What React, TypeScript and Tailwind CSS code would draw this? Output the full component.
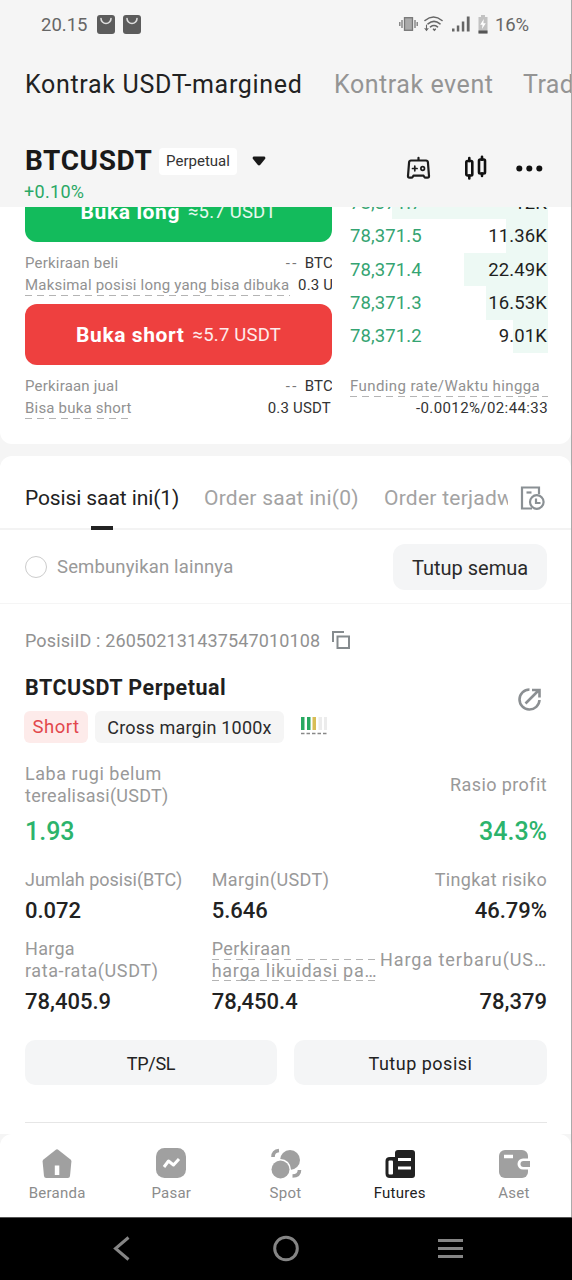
import type { ReactNode } from "react"
import clsx from "clsx"

const orderBook = [
    { price: "78,371.7", amount: "12K", bar: "w-[156px]" },
    { price: "78,371.5", amount: "11.36K", bar: "w-[42px]" },
    { price: "78,371.4", amount: "22.49K", bar: "w-[84px]" },
    { price: "78,371.3", amount: "16.53K", bar: "w-[62px]" },
    { price: "78,371.2", amount: "9.01K", bar: "w-[35px]" },
]

function Dashes({ className }: { className?: string }) {
    return (
        <div
            className={clsx(
                "h-px bg-[repeating-linear-gradient(90deg,#b4b4b4_0_7px,transparent_7px_12px)]",
                className
            )}
        />
    )
}

function StatusBar() {
    return (
        <div className="flex h-12 items-center pl-[41px] pr-[42px] text-[18.5px] text-[#666]">
            <span className="pt-[3px]">20.15</span>
            <div className="ml-[10px] flex gap-2">
                {[0, 1].map((i) => (
                    <svg key={i} width="18" height="19" viewBox="0 0 18 19">
                        <rect width="18" height="19" rx="3" fill="#5c5c5c" />
                        <path d="M4 3.5a5 5 0 0 0 10 0" fill="none" stroke="#dedede" strokeWidth="1.6" strokeLinecap="round" />
                    </svg>
                ))}
            </div>
            <svg className="ml-auto" width="19" height="16" viewBox="0 0 19 16" fill="none" stroke="#777" strokeWidth="1.3">
                <rect x="5.5" y="1.7" width="8" height="12.6" fill="#aaa" />
                <path d="M3 4v8M16 4v8M.8 6v4M18.2 6v4" />
            </svg>
            <svg className="ml-[6px]" width="19" height="16" viewBox="0 0 19 16" fill="none" stroke="#666" strokeWidth="1.6" strokeLinecap="round">
                <path d="M1 4.500Q9.500-2.500 18 4.500M4 7.800Q10 3 16 7.800M6.500 10.800Q10 8.200 13.500 10.800" />
                <path d="M9.500 13.200l.9.900.9-.9" />
                <path d="M2.500 9v5M1 12.500l1.500 1.800L4 12.500" strokeWidth="1.100" />
            </svg>
            <svg className="ml-[9px]" width="18" height="16" viewBox="0 0 18 16" fill="#666">
                <rect x="0" y="12.500" width="2.500" height="3" />
                <rect x="4.800" y="9.500" width="2.500" height="6" />
                <rect x="9.800" y="5.500" width="2.500" height="10" />
                <rect x="14.800" y="0.500" width="2.800" height="15" />
            </svg>
            <svg className="ml-2" width="10" height="19" viewBox="0 0 10 19">
                <path d="M3 0h4v2h2.500v16.500H.500V2H3z" fill="#c2c2c2" />
                <path d="M.500 15.500h9v3h-9z" fill="#555" />
                <path d="M5.800 4L2.200 9.800h2.300L4 14l3.800-5.800H5.400z" fill="#fff" />
            </svg>
            <span className="ml-[7px] pt-[3px] tracking-[-0.1px]">16%</span>
        </div>
    )
}

function Header() {
    return (
        <header className="h-[159px] shrink-0">
            <div className="flex h-[72px] items-center overflow-hidden whitespace-nowrap pl-[25px] pt-px text-[25px] text-[#949494]">
                <span className="w-[309px] shrink-0 tracking-[0.68px] text-[#222]">Kontrak USDT-margined</span>
                <span className="w-[189px] shrink-0 tracking-[0.55px]">Kontrak event</span>
                <span className="tracking-[0.4px]">Trading</span>
            </div>
            <div className="flex pl-[25px] pr-[27px]">
                <div className="flex flex-col pt-[23px]">
                    <div className="flex h-9 items-center">
                        <span className="w-[134px] text-[28px] font-bold tracking-[0.6px] text-[#191919]">BTCUSDT</span>
                        <span className="flex h-[27px] w-[78px] items-center justify-center rounded bg-white text-[15px] text-[#333]">
                            Perpetual
                        </span>
                        <svg className="ml-[15px]" width="14" height="10" viewBox="0 0 14 10">
                            <path d="M1.500.500h11q1.500 1 .5 2.500L8.300 8.800q-1.300 1.200-2.600 0L1 3Q0 1.500 1.500.500z" fill="#191919" />
                        </svg>
                    </div>
                    <span className="-ml-px h-6 text-[18px] leading-[25px] tracking-[0.3px] text-[#2aa865]">+0.10%</span>
                </div>
                <div className="ml-auto flex items-center pt-[13px]">
                    <svg width="26" height="24" viewBox="0 0 26 24" fill="none" stroke="#1d1d1d" strokeWidth="2.200" strokeLinejoin="round" strokeLinecap="round">
                        <path d="M13.500 1.800V4M6 4.500h15q1.700 0 1.900 1.700L24 20q.2 1.700-1.500 1.700h-1.800q-1 0-1.500-1l-.6-1H8.400l-.6 1q-.5 1-1.500 1H4.500Q2.800 21.700 3 20L4.100 6.200Q4.300 4.500 6 4.500z" />
                        <path d="M9.800 10.200v4.600M7.500 12.500h4.600" strokeWidth="1.700" />
                        <circle cx="17.700" cy="12.500" r="1.800" strokeWidth="1.700" />
                    </svg>
                    <svg className="ml-[33px]" width="24" height="26" viewBox="0 0 24 26" fill="none" stroke="#111" strokeWidth="2.600" strokeLinecap="round">
                        <rect x="2.300" y="6" width="6" height="14.500" rx="1.200" />
                        <path d="M5.300 3v3M5.300 20.500v3M18 1.800v3M18 18.500v2.500" />
                        <rect x="15" y="4.500" width="6" height="14" rx="1.200" />
                    </svg>
                    <svg className="ml-[28px] mr-px" width="27" height="7" viewBox="0 0 27 7" fill="#111">
                        <circle cx="3.300" cy="3.500" r="3" />
                        <circle cx="13.300" cy="3.500" r="3" />
                        <circle cx="23.300" cy="3.500" r="3" />
                    </svg>
                </div>
            </div>
        </header>
    )
}

function TradeButton({ className, label }: { className: string; label: string }) {
    return (
        <button className={clsx("flex h-[61px] w-[307px] items-center justify-center rounded-xl pt-px text-white", className)}>
            <span className="text-[21px] font-bold tracking-[0.6px]">{label}</span>
            <span className="ml-2 text-[18.5px] text-white/90">≈5.7 USDT</span>
        </button>
    )
}

function TradePanel() {
    return (
        <section className="h-[237px] shrink-0 overflow-hidden rounded-b-xl bg-white">
            <div className="-mt-[26px] flex pl-[25px]">
                <div className="w-[307px] text-[15px] leading-[22px] tracking-[0.2px] text-[#919191]">
                    <TradeButton className="bg-[#13bb5c]" label="Buka long" />
                    <div className="mt-[10px] flex justify-between overflow-hidden whitespace-nowrap">
                        <span>Perkiraan beli</span>
                        <span className="-mr-px text-[#333]"><span className="mr-[6px] tracking-[2.4px] text-[#777]">--</span>BTC</span>
                    </div>
                    <div className="flex h-[30px] overflow-hidden whitespace-nowrap">
                        <div className="w-[265px] shrink-0">
                            <span>Maksimal posisi long yang bisa dibuka</span>
                            <Dashes className="-mt-px" />
                        </div>
                        <span className="ml-2 w-[34px] overflow-hidden text-[#333]">0.3 USDT</span>
                    </div>
                    <TradeButton className="bg-[#ee403f]" label="Buka short" />
                    <div className="mt-[10px] flex justify-between overflow-hidden whitespace-nowrap">
                        <span>Perkiraan jual</span>
                        <span className="-mr-px text-[#333]"><span className="mr-[6px] tracking-[2.4px] text-[#777]">--</span>BTC</span>
                    </div>
                    <div className="flex justify-between">
                        <div>
                            <span>Bisa buka short</span>
                            <Dashes className="-mt-px" />
                        </div>
                        <span className="pr-px text-[#333]">0.3 USDT</span>
                    </div>
                </div>
                <div className="ml-[18px] w-[198px] pt-[5px]">
                    {orderBook.map((row) => (
                        <div key={row.price} className="relative flex h-[33.4px] items-center justify-between pr-px pt-0.5 text-[18.5px] tracking-[0.1px]">
                            <div className={clsx("absolute inset-y-0 right-0 bg-[#edf9f4]", row.bar)} />
                            <span className="relative text-[#35a472]">{row.price}</span>
                            <span className="relative text-[#1f1f1f]">{row.amount}</span>
                        </div>
                    ))}
                    <div className="mt-[22px] whitespace-nowrap text-[15px] leading-[22px] tracking-[0.4px] text-[#919191]">
                        <span>Funding rate/Waktu hingga</span>
                        <Dashes className="-mt-px" />
                    </div>
                    <div className="text-right text-[15px] leading-[22px] tracking-[0.4px] text-[#333]">-0.0012%/02:44:33</div>
                </div>
            </div>
        </section>
    )
}

function PositionTabs() {
    return (
        <div className="flex h-[74px] items-stretch border-b-2 border-[#f3f3f3] pl-[25px] pr-[26px] text-[21px] leading-[85px] tracking-[0.25px] text-[#a3a3a3]">
            <div className="-mb-0.5 flex w-[154px] shrink-0 flex-col items-center justify-between whitespace-nowrap text-[#222]">
                <span className="h-[60px] tracking-[-0.1px]">Posisi saat ini(1)</span>
                <div className="h-1 w-[22px] bg-[#222]" />
            </div>
            <span className="ml-[25px] w-[156px] shrink-0 whitespace-nowrap">Order saat ini(0)</span>
            <span className="ml-[24px] w-[124px] overflow-hidden whitespace-nowrap">Order terjadwal</span>
            <svg className="ml-auto mt-[30px] shrink-0" width="25" height="25" viewBox="0 0 25 25" fill="none" stroke="#8a9094" strokeWidth="2.200">
                <path d="M19 8V1.500H2v21h10" />
                <path d="M6.500 6.500h5" />
                <circle cx="16.800" cy="16" r="6.800" />
                <path d="M16 12.500V17h4.500" />
            </svg>
        </div>
    )
}

interface FieldProps {
    className?: string
    label: ReactNode
    value: string
    valueClass?: string
}

function Field({ className, label, value, valueClass = "h-[30px] text-[22px] leading-[31px] text-[#222]" }: FieldProps) {
    return (
        <div className={clsx("flex flex-col", className)}>
            <div className="flex flex-1 flex-col justify-center whitespace-nowrap text-[18px] leading-[21.5px] text-[#999]">{label}</div>
            <div className={clsx("font-medium", valueClass)}>{value}</div>
        </div>
    )
}

function Position() {
    const profitClass = "h-[42px] text-[25px] leading-[51px] text-[#2cb36c]"

    return (
        <div className="pl-[25px] pr-6 pt-[22px]">
            <div className="flex h-7 items-center text-[18px] text-[#919191]">
                <span className="tracking-[0.12px]">PosisiID : 260502131437547010108</span>
                <svg className="ml-3" width="18" height="18" viewBox="0 0 18 18" fill="none" stroke="#858b8e" strokeWidth="2">
                    <path d="M1 11V1h11" />
                    <rect x="5.500" y="5.500" width="11.500" height="11.500" />
                </svg>
            </div>
            <div className="mt-[19px] flex justify-between">
                <div>
                    <h2 className="h-[30px] text-[21.5px] font-bold leading-[30px] tracking-[0.5px] text-[#1f1f1f]">BTCUSDT Perpetual</h2>
                    <div className="mt-2 flex h-8 text-[18px] leading-[33px]">
                        <span className="-ml-px w-16 rounded-md bg-[#fdebea] text-center text-[18.5px] tracking-[0.5px] text-[#e2474c]">Short</span>
                        <span className="ml-[7px] w-[189px] rounded-md bg-[#f5f5f5] text-center tracking-[0.2px] text-[#2b2b2b]">Cross margin 1000x</span>
                        <svg className="ml-4 mt-[6px]" width="28" height="19" viewBox="0 0 28 19">
                            <path d="M1 0h3.500v13H1zM7 0h3.500v13H7z" fill="#27a960" />
                            <path d="M12.500 0H16v13h-3.500z" fill="#d8bd55" />
                            <path d="M18.500 0H22v13h-3.500zM24 0h3v13h-3z" fill="#ececec" />
                            <path d="M1 16.500h26" stroke="#888" strokeWidth="1.500" strokeDasharray="3.500 2" />
                        </svg>
                    </div>
                </div>
                <svg className="mr-[5px] mt-[14px]" width="25" height="25" viewBox="0 0 25 25" fill="none" stroke="#8b8f92" strokeWidth="2.600">
                    <path d="M12.500 2.500A10 10 0 1 0 22.500 13" />
                    <path d="M8.500 16.500L21 4M15 3h7.500v7.500" />
                </svg>
            </div>

            <div className="mt-5 flex h-[85px] justify-between">
                <Field
                    label={<><span className="tracking-[0.55px]">Laba rugi belum</span><span className="tracking-[0.25px]">terealisasi(USDT)</span></>}
                    value="1.93"
                    valueClass={profitClass}
                />
                <Field className="text-right" label={<span className="tracking-[0.4px]">Rasio profit</span>} value="34.3%" valueClass={profitClass} />
            </div>
            <div className="mt-[17px] flex h-[60px]">
                <Field className="w-[187px]" label="Jumlah posisi(BTC)" value="0.072" />
                <Field className="w-[167px]" label={<span className="tracking-[0.4px]">Margin(USDT)</span>} value="5.646" />
                <Field className="w-[169px] text-right" label={<span className="tracking-[0.3px]">Tingkat risiko</span>} value="46.79%" />
            </div>
            <div className="mt-2 flex h-[83px]">
                <Field
                    className="w-[187px]"
                    label={<><span className="tracking-[0.3px]">Harga</span><span className="tracking-[0.6px]">rata-rata(USDT)</span></>}
                    value="78,405.9"
                />
                <Field
                    className="w-[167px]"
                    label={
                        <>
                            <span className="tracking-[0.4px]">Perkiraan</span>
                            <Dashes className="-mt-px" />
                            <span className="tracking-[0.7px]">harga likuidasi pa…</span>
                            <Dashes className="-mt-px" />
                        </>
                    }
                    value="78,450.4"
                />
                <Field className="w-[169px] text-right" label={<span className="tracking-[0.95px]">Harga terbaru(US…</span>} value="78,379" />
            </div>

            <div className="mt-6 flex justify-between text-[18px] text-[#222]">
                <button className="h-[45px] w-[252px] rounded-[10px] bg-[#f4f5f6] pt-px tracking-[-0.3px]">TP/SL</button>
                <button className="h-[45px] w-[253px] rounded-[10px] bg-[#f4f5f6] pt-px tracking-[0.5px]">Tutup posisi</button>
            </div>
            <div className="mt-[37px] h-px bg-[#e6e6e6]" />
        </div>
    )
}

const navItems = [
    {
        label: "Beranda",
        icon: (
            <>
                <path d="M13.500 1.900q1.500-1.200 3 0L28.500 11.500q1 .9.9 2L28 28q-.2 2-2.200 2H4.200q-2 0-2.200-2L.600 13.500q-.1-1.100.9-2z" />
                <rect x="12.800" y="17.500" width="4.500" height="9.500" fill="#fff" />
            </>
        ),
    },
    {
        label: "Pasar",
        icon: (
            <>
                <rect width="30" height="30" rx="8.500" />
                <path d="M8 19l4.500-6 5 4 5.500-6" fill="none" stroke="#fff" strokeWidth="3" strokeLinejoin="round" />
            </>
        ),
    },
    {
        label: "Spot",
        icon: (
            <>
                <circle cx="19" cy="12" r="10" />
                <circle cx="9.500" cy="21.500" r="10.500" fill="#fff" />
                <circle cx="9.500" cy="21.500" r="9" />
                <path d="M2 9q0-6 6-6.500M21.500 28q7 0 7-6" fill="none" stroke="currentColor" strokeWidth="3.600" />
            </>
        ),
    },
    {
        label: "Futures",
        active: true,
        icon: (
            <>
                <path d="M10 5q0-3 3-3h14q3 0 3 3v22q0 3-3 3H5q-4.500 0-4.500-4.500V13Q.500 9 5 9h5z" />
                <rect x="3.500" y="12.500" width="4.500" height="14" rx="1" fill="#fff" />
                <path d="M13 11.500h13M13 20h13" stroke="#fff" strokeWidth="3" />
            </>
        ),
    },
    {
        label: "Aset",
        icon: (
            <>
                <rect y="2" width="29" height="28" rx="6" />
                <path d="M31 10.500h-7a5.500 5.500 0 0 0 0 11h7z" fill="#fff" />
                <path d="M31 13h-6.500a3 3 0 0 0 0 6H31z" />
                <path d="M5 8.500h9" stroke="#fff" strokeWidth="3.500" />
            </>
        ),
    },
]

function BottomNav() {
    return (
        <nav className="flex h-[83px] shrink-0 justify-between rounded-t-xl bg-white">
            {navItems.map((item) => (
                <div
                    key={item.label}
                    className={clsx(
                        "flex flex-1 flex-col items-center pt-[14px] text-[15px] tracking-[0.25px]",
                        item.active ? "text-[#222]" : "text-[#a0a0a0]"
                    )}
                >
                    <svg className="ml-px" width="31" height="31" viewBox="0 0 31 31" fill="currentColor">{item.icon}</svg>
                    <span className={clsx("mt-[3px] leading-[22px]", !item.active && "text-[#8c8c8c]")}>{item.label}</span>
                </div>
            ))}
        </nav>
    )
}

function SystemNav() {
    return (
        <div className="flex h-[63px] shrink-0 items-center justify-center border-t border-[#555] bg-black">
            <svg className="overflow-visible" width="352" height="26" viewBox="0 0 352 26" fill="none" stroke="#858585" strokeWidth="3">
                <path d="M18.500 1.500L5.500 12.500l13 11" />
                <circle cx="176" cy="12.500" r="11.300" />
                <path d="M328 4.500h25M328 12.500h25M328 20.500h25" />
            </svg>
        </div>
    )
}

export default function App() {
    return (
        <div className="flex h-[1280px] w-[572px] flex-col overflow-hidden bg-[#f5f5f5] font-['Roboto','Liberation_Sans',sans-serif]">
            <div className="flex h-[1217px] shrink-0 flex-col border-r border-[#aaa]">
                <StatusBar />
                <Header />
                <TradePanel />
                <section className="mt-3 h-[678px] shrink-0 rounded-t-xl bg-white">
                    <PositionTabs />
                    <div className="flex h-[74px] items-center border-b border-[#f5f5f5] pl-[25px] pr-6 text-[#999]">
                        <div className="size-[22px] rounded-full border border-[#ccc]" />
                        <span className="ml-[10px] pt-[3px] text-[18.5px] tracking-[0.15px]">Sembunyikan lainnya</span>
                        <button className="ml-auto h-[46px] w-[154px] rounded-xl bg-[#f4f5f6] pt-0.5 text-[20px] text-[#2a2a2a]">
                            Tutup semua
                        </button>
                    </div>
                    <Position />
                </section>
                <BottomNav />
            </div>
            <SystemNav />
        </div>
    )
}
